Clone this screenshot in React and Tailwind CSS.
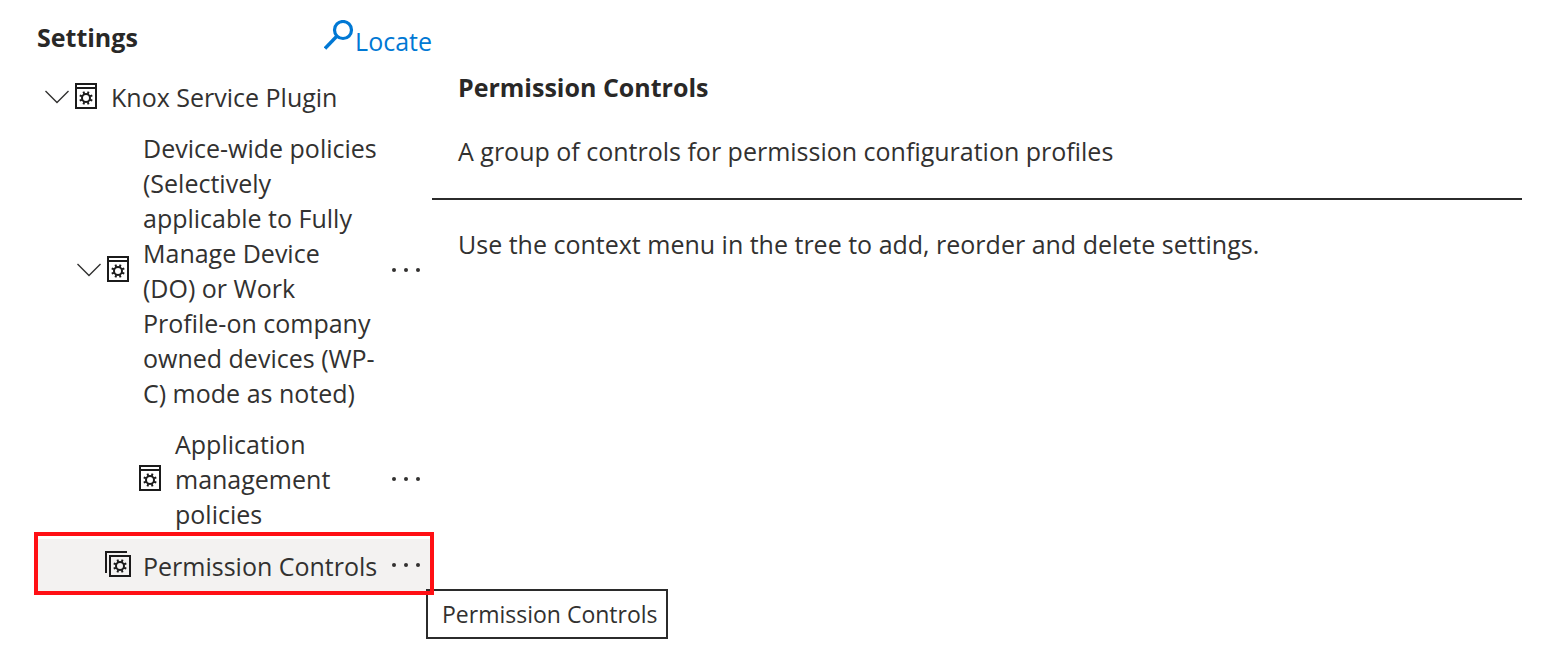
const GEAR_TEETH = [0, 45, 90, 135, 180, 225, 270, 315];

function Gear({ cx, cy }) {
  return (
    <g stroke="currentColor" fill="none">
      <circle cx={cx} cy={cy} r="4" strokeWidth="2" />
      {GEAR_TEETH.map((angle) => (
        <path
          key={angle}
          d={`M${cx} ${cy - 4.5}v-2.3`}
          strokeWidth="2"
          transform={`rotate(${angle + 22.5} ${cx} ${cy})`}
        />
      ))}
    </g>
  );
}

function SettingIcon() {
  return (
    <svg width="22" height="28" viewBox="0 0 22 28" className="shrink-0 text-[#1b1b1b]" aria-hidden="true">
      <path d="M1 1h20v24H1zM1 5h20" fill="none" stroke="currentColor" strokeWidth="2" />
      <Gear cx={11} cy={15} />
    </svg>
  );
}

function SettingGroupIcon() {
  return (
    <svg width="26" height="28" viewBox="0 0 26 28" className="-ml-0.5 -mr-0.5 shrink-0 text-[#1b1b1b]" aria-hidden="true">
      <path d="M1 22V1h21M5 5h20v20H5z" fill="none" stroke="currentColor" strokeWidth="2" />
      <Gear cx={15} cy={15} />
    </svg>
  );
}

function Chevron() {
  return (
    <svg width="24" height="14" viewBox="0 0 24 14" aria-hidden="true">
      <path d="M.5 1 12 12.5 23.5 1" fill="none" stroke="currentColor" strokeWidth="1.4" />
    </svg>
  );
}

function TreeRow({ indent, label, lines, group, expandable, menu, selected }) {
  return (
    <li
      className={`${indent} ${selected ? "min-h-[52px] bg-[#f3f2f1]" : ""} flex items-center pr-2`}
      aria-current={selected ? "true" : undefined}
    >
      {expandable ? (
        <button type="button" aria-label={`Collapse ${label}`} className="mr-1.5 w-6 shrink-0">
          <Chevron />
        </button>
      ) : (
        <span className="mr-1.5 w-6 shrink-0" />
      )}
      {group ? <SettingGroupIcon /> : <SettingIcon />}
      <span className="ml-3.5 flex-1 pt-[9px] pb-[7px] whitespace-nowrap">
        {lines.map((line) => (
          <span key={line} className="block">
            {line}
          </span>
        ))}
      </span>
      {menu && (
        <button type="button" aria-label={`More actions for ${label}`} className="shrink-0 px-0.5">
          <svg width="32" height="16" viewBox="0 0 32 16" fill="currentColor" aria-hidden="true">
            <circle cx="4" cy="8" r="2" />
            <circle cx="16" cy="8" r="2" />
            <circle cx="28" cy="8" r="2" />
          </svg>
        </button>
      )}
    </li>
  );
}

const ROWS = [
  { indent: "pl-2", label: "Knox Service Plugin", lines: ["Knox Service Plugin"], expandable: true },
  {
    indent: "pl-10",
    label: "Device-wide policies",
    lines: [
      "Device-wide policies",
      "(Selectively",
      "applicable to Fully",
      "Manage Device",
      "(DO) or Work",
      "Profile-on company",
      "owned devices (WP-",
      "C) mode as noted)",
    ],
    expandable: true,
    menu: true,
  },
  {
    indent: "pl-[72px]",
    label: "Application management policies",
    lines: ["Application", "management", "policies"],
    menu: true,
  },
  {
    indent: "pl-10",
    label: "Permission Controls",
    lines: ["Permission Controls"],
    group: true,
    menu: true,
    selected: true,
  },
];

export default function App() {
  return (
    <div className="flex min-h-screen bg-white pr-[34px] pl-[37px] font-['Open_Sans','Noto_Sans',sans-serif] text-[25px] leading-[35px] text-[#323130]">
      <aside className="w-[395px] shrink-0 pt-5">
        <div className="flex h-[51px] items-start justify-between">
          <h2 className="font-bold text-[#292827]">Settings</h2>
          <a href="#locate" className="flex text-[#0078d4]">
            <svg width="30" height="32" viewBox="0 0 30 32" className="mr-px shrink-0" aria-hidden="true">
              <circle cx="19" cy="10" r="8.5" fill="none" stroke="currentColor" strokeWidth="3.2" />
              <path d="M13 16 1 28.5" fill="none" stroke="currentColor" strokeWidth="3.4" />
            </svg>
            <span className="pt-1">Locate</span>
          </a>
        </div>
        <div className="relative">
          <ul>
            {ROWS.map((row) => (
              <TreeRow key={row.label} {...row} />
            ))}
          </ul>
          <div
            role="tooltip"
            className="absolute top-full left-[389px] -mt-0.5 border-2 border-[#2b2b2b] bg-white py-[7px] pr-2 pl-3.5 text-[23px] leading-8 whitespace-nowrap"
          >
            Permission Controls
          </div>
          <div className="pointer-events-none absolute -right-0.5 -bottom-1 -left-[3px] h-[63px] border-4 border-[#ff0f14]" />
        </div>
      </aside>
      <main className="min-w-0 flex-1 pt-[70px]">
        <div className="border-b-2 border-[#2b2b2b] px-[26px] pb-[29px]">
          <h1 className="font-bold text-[#292827]">Permission Controls</h1>
          <p className="mt-[29px]">A group of controls for permission configuration profiles</p>
        </div>
        <p className="px-[26px] pt-[27px]">Use the context menu in the tree to add, reorder and delete settings.</p>
      </main>
    </div>
  );
}
